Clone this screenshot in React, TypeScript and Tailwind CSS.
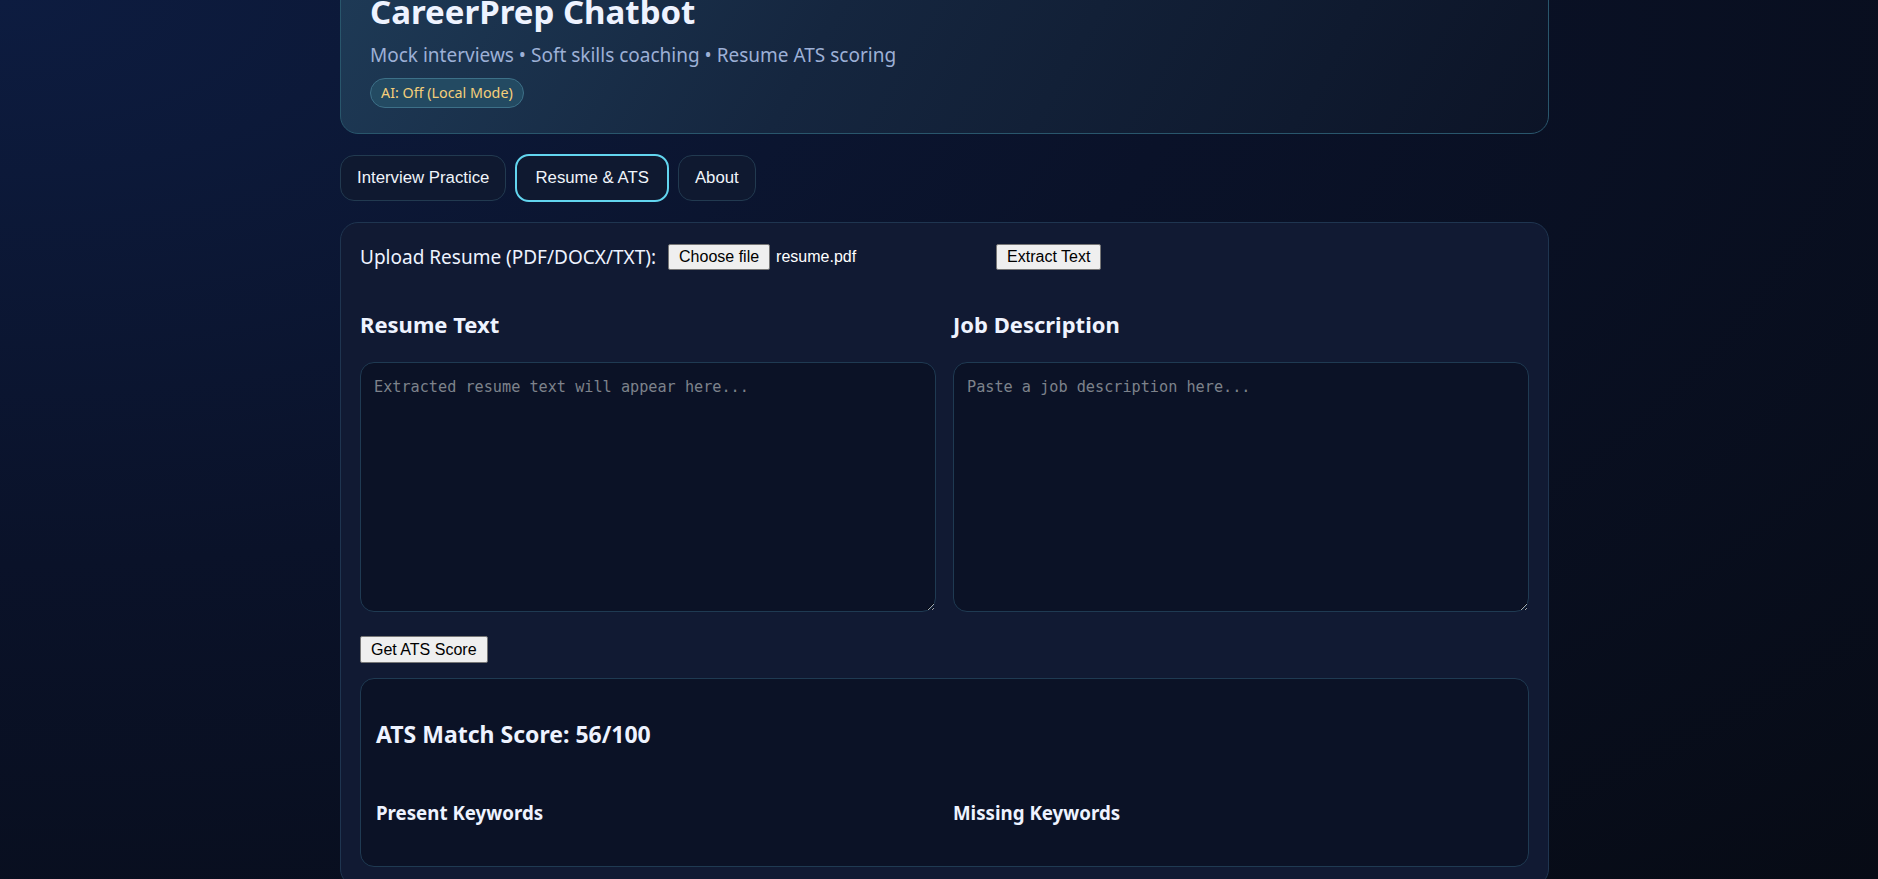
import { useState } from 'react'

const TABS = ['Interview Practice', 'Resume & ATS', 'About']

export default function App() {
    const [tab, setTab] = useState('Resume & ATS')
    const [resume, setResume] = useState('')
    const [jd, setJd] = useState('')

    return (
        <div className="min-h-screen bg-[radial-gradient(ellipse_at_0%_0%,#0d1c40_0%,#0a1229_45%,#070b15_100%)] font-['Noto_Sans',sans-serif] overflow-hidden">
            <div className="flex justify-center pl-[11px]">
                <div className="w-[1209px] -mt-[34px]">
                    {/* Header */}
                    <div className="rounded-[18px] border border-[#29566c] bg-[linear-gradient(120deg,#1e3a56_0%,#15263f_40%,#0c1427_100%)] px-[29px] pt-[25px] pb-[25px]">
                        <h1 className="text-[33px] leading-[40px] font-bold text-[#eef3ff]">CareerPrep Chatbot</h1>
                        <p className="mt-[10px] text-[19px] leading-[27px] text-[#9db0d6]">
                            Mock interviews • Soft skills coaching • Resume ATS scoring
                        </p>
                        <span className="mt-[9px] inline-flex h-[30px] items-center rounded-full border border-[#3d7088] bg-[#234a62] px-[10px] text-[14.3px] text-[#f5cf7a]">
                            AI: Off (Local Mode)
                        </span>
                    </div>

                    {/* Tabs */}
                    <div className="mt-[20px] flex items-center gap-[9px] font-['Liberation_Sans',Arial,sans-serif]">
                        {TABS.map(t => (
                            <button
                                key={t}
                                onClick={() => setTab(t)}
                                className={`rounded-[14px] bg-[#0f1930] text-[16.8px] text-[#f0f4fa] ${
                                    tab === t
                                        ? 'h-[48px] border-2 border-[#62d5ef] px-[18px]'
                                        : 'h-[46px] border border-[#223a50] px-[16px]'
                                }`}
                            >
                                {t}
                            </button>
                        ))}
                    </div>

                    {/* Main card */}
                    <div className="mt-[20px] rounded-[18px] border border-[#1f3550] bg-[#111a33] px-[19px] pt-[21px] pb-[19px]">
                        <div className="flex items-center gap-[12px]">
                            <span className="text-[19px] leading-[25px] text-[#eef3ff]">Upload Resume (PDF/DOCX/TXT):</span>
                            <div className="flex w-[316px] items-center gap-[6px] font-['Liberation_Sans',Arial,sans-serif] text-[16px]">
                                <button className="h-[26px] rounded-[2px] border border-[#767676] bg-[#efefef] px-[10px] text-black">
                                    Choose file
                                </button>
                                <span className="text-white">resume.pdf</span>
                            </div>
                            <button className="h-[26px] rounded-[2px] border border-[#767676] bg-[#efefef] px-[10px] font-['Liberation_Sans',Arial,sans-serif] text-[16px] text-black">
                                Extract Text
                            </button>
                        </div>

                        <div className="mt-[39px] grid grid-cols-2 gap-x-[17px]">
                            <div>
                                <h3 className="text-[22px] leading-[30px] font-bold text-[#eef3ff]">Resume Text</h3>
                                <textarea
                                    value={resume}
                                    onChange={e => setResume(e.target.value)}
                                    placeholder="Extracted resume text will appear here..."
                                    className="mt-[23px] block h-[250px] w-full rounded-[14px] border border-[#1f3a52] bg-[#0b1226] px-[13px] pt-[13px] pb-[11px] font-['DejaVu_Sans_Mono',monospace] text-[15.2px] leading-[22px] text-[#dbe4f3] placeholder-[#7d828b] outline-none"
                                />
                            </div>
                            <div>
                                <h3 className="text-[22px] leading-[30px] font-bold text-[#eef3ff]">Job Description</h3>
                                <textarea
                                    value={jd}
                                    onChange={e => setJd(e.target.value)}
                                    placeholder="Paste a job description here..."
                                    className="mt-[23px] block h-[250px] w-full rounded-[14px] border border-[#1f3a52] bg-[#0b1226] px-[13px] pt-[13px] pb-[11px] font-['DejaVu_Sans_Mono',monospace] text-[15.2px] leading-[22px] text-[#dbe4f3] placeholder-[#7d828b] outline-none"
                                />
                            </div>
                        </div>

                        <button className="mt-[24px] h-[27px] rounded-[2px] border border-[#767676] bg-[#efefef] px-[10px] font-['Liberation_Sans',Arial,sans-serif] text-[16px] text-black">
                            Get ATS Score
                        </button>

                        {/* Results */}
                        <div className="mt-[15px] rounded-[14px] border border-[#1f3a52] bg-[#0b1226] px-[15px] pt-[40px] pb-[40px]">
                            <h3 className="text-[23px] leading-[30px] font-bold text-[#eef3ff]">ATS Match Score: 56/100</h3>
                            <div className="mt-[51px] grid grid-cols-2 gap-x-[17px]">
                                <h4 className="text-[18.7px] leading-[26px] font-bold text-[#eef3ff]">Present Keywords</h4>
                                <h4 className="text-[18.7px] leading-[26px] font-bold text-[#eef3ff]">Missing Keywords</h4>
                            </div>
                        </div>
                    </div>
                </div>
            </div>
        </div>
    )
}
